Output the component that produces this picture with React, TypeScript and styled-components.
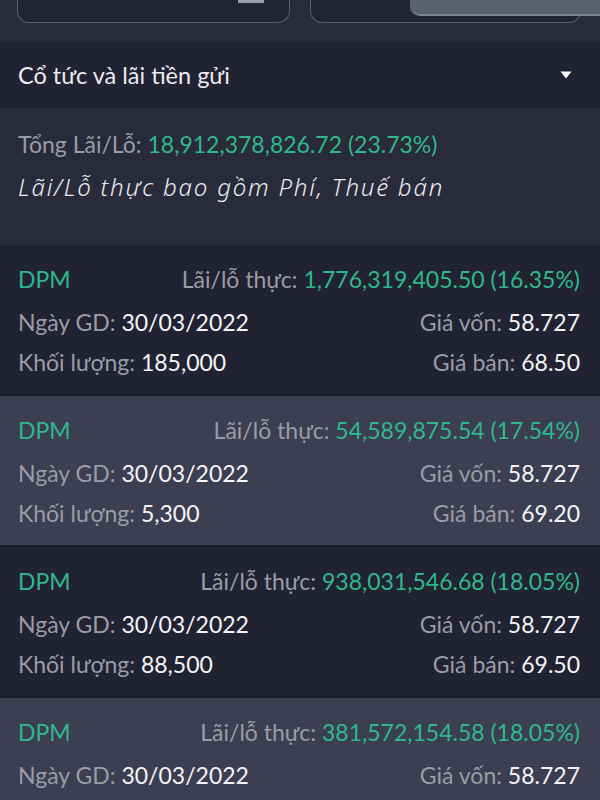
import { styled, createGlobalStyle } from 'styled-components';

const GlobalStyle = createGlobalStyle`
  html, body {
    margin: 0;
    padding: 0;
    background-color: #292b3b;
    font-family: Lato, "Noto Sans", sans-serif;
  }
`;

const StyledPage = styled.div`
  position: relative;
  width: 600px;
  height: 800px;
  overflow: hidden;
  background-color: #292b3b;
`;

const StyledFilterRow = styled.div`
  display: grid;
  grid-template-columns: 273px 271px;
  gap: 20px;
  padding: 0 20px 0 17px;
  height: 42px;
`;

const StyledFilterBox = styled.div`
  position: relative;
  height: 22px;
  background-color: #222435;
  border: 1.5px solid #5b5e70;
  border-top: none;
  border-radius: 0 0 12px 12px;
`;

const StyledBoxIcon = styled.div`
  position: absolute;
  top: 0;
  right: 25px;
  width: 26px;
  height: 3px;
  background-color: #9a9ca8;
`;

const StyledTooltip = styled.div`
  position: absolute;
  top: 0;
  left: 410px;
  width: 200px;
  height: 14px;
  background-color: #5a6272;
  border-bottom: 2px solid #7c8292;
  border-radius: 0 0 0 10px;
`;

const StyledSectionHeader = styled.div`
  display: flex;
  align-items: center;
  justify-content: space-between;
  height: 66px;
  padding: 0 28px 0 18px;
  background-color: #212232;
  color: #ececf0;
  font-size: 23.5px;
`;

const StyledSummary = styled.div`
  display: flex;
  flex-direction: column;
  gap: 12px;
  padding: 22px 18px 0;
  height: 115px;
`;

const StyledSummaryLine = styled.div`
  font-size: 23px;
  color: #9a9ca6;
`;

const StyledNote = styled.div`
  font-family: "Noto Sans", sans-serif;
  font-size: 24px;
  font-style: italic;
  font-weight: 300;
  letter-spacing: 1.8px;
  color: #ececf0;
`;

const StyledList = styled.div`
  display: flex;
  flex-direction: column;
  gap: 2px;
  background-color: #1b1c28;
`;

const StyledCard = styled.div<{ $light: boolean }>`
  display: flex;
  flex-direction: column;
  height: 149px;
  padding: 12px 20px 0 18px;
  box-sizing: border-box;
  background-color: ${(p) => (p.$light ? '#3c3f51' : '#212333')};
`;

const StyledRow = styled.div<{ $height: number }>`
  display: flex;
  align-items: center;
  justify-content: space-between;
  height: ${(p) => p.$height}px;
  font-size: 23px;
  color: #9a9ca6;
`;

const StyledSymbol = styled.span`
  font-size: 23px;
  color: #2fb88d;
`;

const StyledGreen = styled.span`
  color: #2fb88d;
`;

const StyledValue = styled.span`
  color: #f4f4f6;
`;

type Trade = {
  symbol: string;
  profit: string;
  pct: string;
  date: string;
  cost: string;
  volume: string;
  price: string;
};

const trades: Trade[] = [
  { symbol: 'DPM', profit: '1,776,319,405.50', pct: '16.35%', date: '30/03/2022', cost: '58.727', volume: '185,000', price: '68.50' },
  { symbol: 'DPM', profit: '54,589,875.54', pct: '17.54%', date: '30/03/2022', cost: '58.727', volume: '5,300', price: '69.20' },
  { symbol: 'DPM', profit: '938,031,546.68', pct: '18.05%', date: '30/03/2022', cost: '58.727', volume: '88,500', price: '69.50' },
  { symbol: 'DPM', profit: '381,572,154.58', pct: '18.05%', date: '30/03/2022', cost: '58.727', volume: '', price: '' },
];

function Caret() {
  return (
    <svg width="12" height="8" viewBox="0 0 12 8">
      <path d="M0.5 0.5 H11.5 L6 7.5 Z" fill="#ffffff" />
    </svg>
  );
}

export default function App() {
  return (
    <StyledPage>
      <GlobalStyle />
      <StyledFilterRow>
        <StyledFilterBox>
          <StyledBoxIcon />
        </StyledFilterBox>
        <StyledFilterBox />
      </StyledFilterRow>
      <StyledTooltip />

      <StyledSectionHeader>
        <span>Cổ tức và lãi tiền gửi</span>
        <Caret />
      </StyledSectionHeader>

      <StyledSummary>
        <StyledSummaryLine>
          Tổng Lãi/Lỗ: <StyledGreen>18,912,378,826.72 (23.73%)</StyledGreen>
        </StyledSummaryLine>
        <StyledNote>Lãi/Lỗ thực bao gồm Phí, Thuế bán</StyledNote>
      </StyledSummary>

      <StyledList>
        {trades.map((t, i) => (
          <StyledCard key={i} $light={i % 2 === 1}>
            <StyledRow $height={44}>
              <StyledSymbol>{t.symbol}</StyledSymbol>
              <span>
                Lãi/lỗ thực:{' '}
                <StyledGreen>
                  {t.profit} ({t.pct})
                </StyledGreen>
              </span>
            </StyledRow>
            <StyledRow $height={42}>
              <span>
                Ngày GD: <StyledValue>{t.date}</StyledValue>
              </span>
              <span>
                Giá vốn: <StyledValue>{t.cost}</StyledValue>
              </span>
            </StyledRow>
            {t.volume && (
              <StyledRow $height={38}>
                <span>
                  Khối lượng: <StyledValue>{t.volume}</StyledValue>
                </span>
                <span>
                  Giá bán: <StyledValue>{t.price}</StyledValue>
                </span>
              </StyledRow>
            )}
          </StyledCard>
        ))}
      </StyledList>
    </StyledPage>
  );
}
